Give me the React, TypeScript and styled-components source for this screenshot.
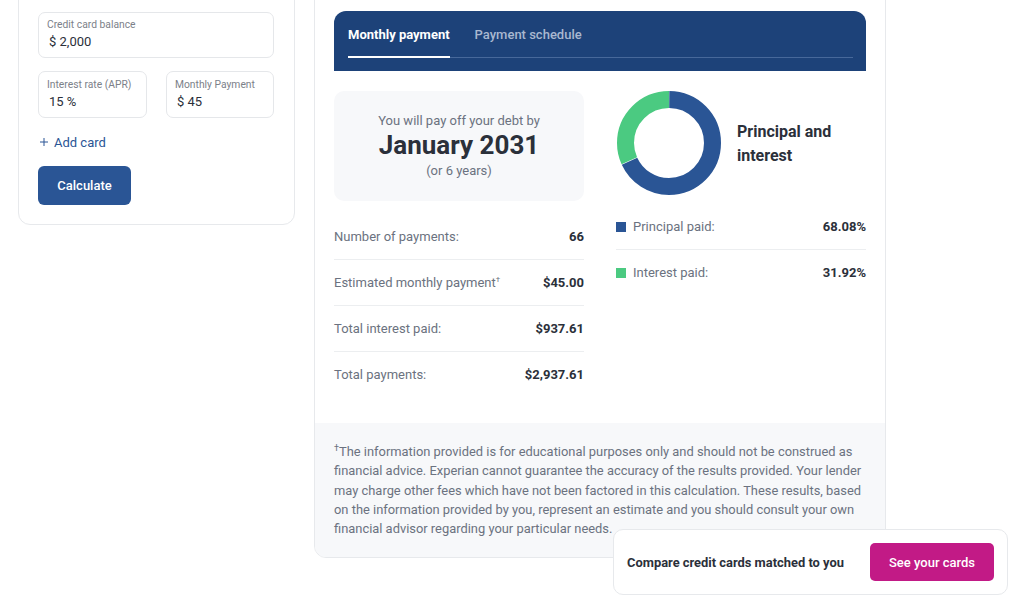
import React from "react";
import styled, { createGlobalStyle } from "styled-components";

const Global = createGlobalStyle`
  html, body { margin: 0; padding: 0; background: #fff; }
  body { font-family: Roboto, "Liberation Sans", sans-serif; color: #2b303a; }
  #root { height: 597px; overflow: hidden; position: relative; }
  * { box-sizing: border-box; }
`;

const Page = styled.div`
  display: flex;
  align-items: flex-start;
  gap: 19px;
  margin-top: -20px;
  padding-left: 18px;
`;

const LeftCard = styled.section`
  width: 277px;
  height: 245px;
  border: 1px solid #e7e9ec;
  border-radius: 12px;
  padding: 31px 20px 0 19px;
  display: flex;
  flex-direction: column;
  align-items: flex-start;
`;

const Field = styled.div<{ $w: number }>`
  width: ${(p) => p.$w}px;
  height: 46px;
  border: 1px solid #e5e7ea;
  border-radius: 7px;
  padding: 5px 8px 0;
`;

const FieldRow = styled.div`
  display: flex;
  justify-content: space-between;
  width: 236px;
  margin-top: 13px;
  ${Field} {
    height: 47px;
    padding-top: 6px;
  }
`;

const FieldLabel = styled.div`
  font-size: 10.3px;
  line-height: 14px;
  color: #7c8189;
`;

const FieldValue = styled.div`
  font-size: 13px;
  line-height: 20px;
  padding-left: 2px;
  color: #2b303a;
`;

const AddCard = styled.div`
  display: flex;
  align-items: center;
  gap: 6px;
  margin-top: 14px;
  height: 20px;
  padding-left: 2px;
  font-size: 13px;
  color: #2a5595;
`;

const CalcButton = styled.button`
  margin-top: 14px;
  width: 93px;
  height: 39px;
  border: none;
  border-radius: 6px;
  background: #2a5595;
  color: #fff;
  font: 500 13px Roboto, sans-serif;
`;

const RightCard = styled.section`
  width: 572px;
  height: 578px;
  border: 1px solid #e7e9ec;
  border-radius: 12px;
  display: flex;
  flex-direction: column;
  overflow: hidden;
`;

const Main = styled.div`
  height: 442px;
  padding: 30px 19px 0;
`;

const TabBar = styled.div`
  height: 60px;
  background: #1d4279;
  border-radius: 12px 12px 0 0;
  padding: 0 13px 0 14px;
`;

const TabList = styled.div`
  display: flex;
  gap: 25px;
  height: 47px;
  border-bottom: 1px solid #47689a;
`;

const Tab = styled.div<{ $active?: boolean }>`
  height: 47px;
  line-height: 47px;
  font-size: 13px;
  font-weight: ${(p) => (p.$active ? 700 : 500)};
  color: ${(p) => (p.$active ? "#fff" : "#a9b8d0")};
  border-bottom: ${(p) => (p.$active ? "2px solid #fff" : "none")};
`;

const Columns = styled.div`
  display: flex;
  gap: 32px;
  margin-top: 20px;
`;

const Column = styled.div`
  width: 250px;
`;

const Summary = styled.div`
  height: 110px;
  border-radius: 10px;
  background: #f7f8fa;
  text-align: center;
  padding-top: 21px;
`;

const SummaryText = styled.div`
  font-size: 13px;
  line-height: 18px;
  color: #6b7280;
`;

const SummaryDate = styled.div`
  font-size: 26px;
  line-height: 30px;
  font-weight: 700;
  color: #2b303a;
  margin-bottom: 2px;
`;

const Rows = styled.div`
  margin-top: 13px;
`;

const Row = styled.div`
  height: 46px;
  display: flex;
  align-items: center;
  justify-content: space-between;
  border-bottom: 1px solid #eceef0;
  font-size: 13px;
  color: #6b7280;
  &:last-child { border-bottom-color: transparent; }
`;

const RowValue = styled.span`
  font-weight: 700;
  color: #2b303a;
`;

const Sup = styled.sup`
  font-size: 8px;
  line-height: 0;
`;

const ChartHead = styled.div`
  display: flex;
  align-items: center;
  gap: 16px;
  padding-left: 1px;
`;

const ChartTitle = styled.h3`
  margin: 2px 0 0;
  font-size: 16px;
  line-height: 24px;
  font-weight: 700;
  width: 110px;
  color: #2b303a;
`;

const Legend = styled.div`
  margin-top: 9px;
`;

const LegendLabel = styled.span`
  display: flex;
  align-items: center;
  gap: 7px;
`;

const Swatch = styled.i<{ $color: string }>`
  width: 10px;
  height: 10px;
  background: ${(p) => p.$color};
`;

const Footnote = styled.div`
  flex: 1;
  background: #f7f8fa;
  padding: 19px 19px 0;
  font-size: 12.9px;
  line-height: 19.3px;
  color: #6b7280;
`;

const FootSup = styled.sup`
  font-size: 9px;
  line-height: 0;
`;

const Banner = styled.aside`
  position: absolute;
  left: 613px;
  top: 529px;
  width: 395px;
  height: 66px;
  background: #fff;
  border: 1px solid #e7e9ec;
  border-radius: 10px;
  display: flex;
  align-items: center;
  justify-content: space-between;
  padding: 0 13px;
`;

const BannerText = styled.span`
  font-size: 12.9px;
  font-weight: 700;
  color: #2b303a;
`;

const BannerButton = styled.button`
  width: 124px;
  height: 38px;
  border: none;
  border-radius: 5px;
  background: #c21a86;
  color: #fff;
  font: 500 13px Roboto, sans-serif;
`;

const C = 2 * Math.PI * 43.5;

const Donut = () => (
  <svg width="104" height="104" viewBox="0 0 104 104">
    <g transform="rotate(-90 52 52)" fill="none" strokeWidth="17">
      <circle cx="52" cy="52" r="43.5" stroke="#2a5595" strokeDasharray={`${C * 0.6808 - 0.5} ${C}`} strokeDashoffset={-0.25} />
      <circle cx="52" cy="52" r="43.5" stroke="#4bca81" strokeDasharray={`${C * 0.3192 - 0.5} ${C}`} strokeDashoffset={-(C * 0.6808 + 0.25)} />
    </g>
  </svg>
);

export default function App() {
  return (
    <>
      <Global />
      <Page>
        <LeftCard>
          <Field $w={236}>
            <FieldLabel>Credit card balance</FieldLabel>
            <FieldValue>$ 2,000</FieldValue>
          </Field>
          <FieldRow>
            <Field $w={109}>
              <FieldLabel>Interest rate (APR)</FieldLabel>
              <FieldValue>15 %</FieldValue>
            </Field>
            <Field $w={108}>
              <FieldLabel>Monthly Payment</FieldLabel>
              <FieldValue>$ 45</FieldValue>
            </Field>
          </FieldRow>
          <AddCard>
            <svg width="8" height="8" viewBox="0 0 8 8" stroke="#2a5595" strokeWidth="1">
              <path d="M4 0v8M0 4h8" />
            </svg>
            Add card
          </AddCard>
          <CalcButton>Calculate</CalcButton>
        </LeftCard>
        <RightCard>
          <Main>
            <TabBar>
              <TabList>
                <Tab $active>Monthly payment</Tab>
                <Tab>Payment schedule</Tab>
              </TabList>
            </TabBar>
            <Columns>
              <Column>
                <Summary>
                  <SummaryText>You will pay off your debt by</SummaryText>
                  <SummaryDate>January 2031</SummaryDate>
                  <SummaryText>(or 6 years)</SummaryText>
                </Summary>
                <Rows>
                  <Row>Number of payments:<RowValue>66</RowValue></Row>
                  <Row><span>Estimated monthly payment<Sup>†</Sup></span><RowValue>$45.00</RowValue></Row>
                  <Row>Total interest paid:<RowValue>$937.61</RowValue></Row>
                  <Row>Total payments:<RowValue>$2,937.61</RowValue></Row>
                </Rows>
              </Column>
              <Column>
                <ChartHead>
                  <Donut />
                  <ChartTitle>Principal and interest</ChartTitle>
                </ChartHead>
                <Legend>
                  <Row>
                    <LegendLabel><Swatch $color="#2a5595" />Principal paid:</LegendLabel>
                    <RowValue>68.08%</RowValue>
                  </Row>
                  <Row>
                    <LegendLabel><Swatch $color="#4bca81" />Interest paid:</LegendLabel>
                    <RowValue>31.92%</RowValue>
                  </Row>
                </Legend>
              </Column>
            </Columns>
          </Main>
          <Footnote>
            <FootSup>†</FootSup>The information provided is for educational purposes only and should not be construed as financial advice. Experian cannot guarantee the accuracy of the results provided. Your lender may charge other fees which have not been factored in this calculation. These results, based on the information provided by you, represent an estimate and you should consult your own financial advisor regarding your particular needs.
          </Footnote>
        </RightCard>
      </Page>
      <Banner>
        <BannerText>Compare credit cards matched to you</BannerText>
        <BannerButton>See your cards</BannerButton>
      </Banner>
    </>
  );
}
